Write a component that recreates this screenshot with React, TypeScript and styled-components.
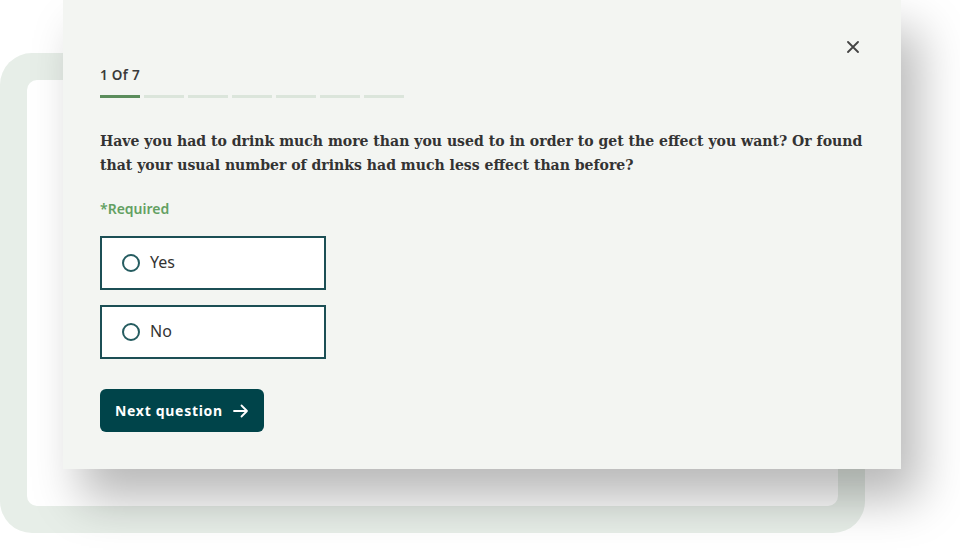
import React from "react";
import styled, { createGlobalStyle } from "styled-components";

const GlobalStyle = createGlobalStyle`
  html, body {
    margin: 0;
    padding: 0;
    background: #ffffff;
  }
  body {
    font-family: "Noto Sans", "Open Sans", sans-serif;
    color: #333333;
  }
`;

const options = ["Yes", "No"];
const totalSteps = 7;
const currentStep = 1;

const App: React.FC = () => {
  return (
    <>
      <GlobalStyle />
      <Stage>
        <BackFrame>
          <BackInner />
        </BackFrame>
        <Card>
          <CloseRow>
            <CloseButton aria-label="Close">
              <svg width="12" height="12" viewBox="0 0 12 12">
                <path
                  d="M1 1 L11 11 M11 1 L1 11"
                  stroke="#444"
                  strokeWidth="1.8"
                  strokeLinecap="round"
                />
              </svg>
            </CloseButton>
          </CloseRow>

          <StepLabel>
            {currentStep} Of {totalSteps}
          </StepLabel>
          <Progress>
            {Array.from({ length: totalSteps }).map((_, i) => (
              <Segment key={i} active={i < currentStep} />
            ))}
          </Progress>

          <Question>
            Have you had to drink much more than you used to in order to get the
            effect you want? Or found that your usual number of drinks had much
            less effect than before?
          </Question>

          <Required>*Required</Required>

          <Options>
            {options.map(o => (
              <Option key={o}>
                <Radio />
                <OptionText>{o}</OptionText>
              </Option>
            ))}
          </Options>

          <NextButton>
            Next question
            <svg width="16" height="14" viewBox="0 0 16 14">
              <path
                d="M1 7 H14 M8.5 1.5 L14 7 L8.5 12.5"
                stroke="#fff"
                strokeWidth="1.8"
                fill="none"
                strokeLinecap="round"
                strokeLinejoin="round"
              />
            </svg>
          </NextButton>
        </Card>
      </Stage>
    </>
  );
};

export default App;

const Stage = styled.div`
  width: 960px;
  height: 556px;
  overflow: hidden;
  display: grid;
  grid-template-columns: 1fr;
  grid-template-rows: 1fr;
`;

const BackFrame = styled.div`
  grid-area: 1 / 1;
  align-self: start;
  justify-self: start;
  margin-top: 53px;
  width: 865px;
  height: 480px;
  box-sizing: border-box;
  padding: 27px;
  border-radius: 32px;
  background: #e7eee8;
  display: flex;
`;

const BackInner = styled.div`
  flex: 1;
  background: #ffffff;
  border-radius: 10px;
`;

const Card = styled.div`
  grid-area: 1 / 1;
  align-self: start;
  justify-self: start;
  margin-left: 63px;
  width: 838px;
  height: 469px;
  box-sizing: border-box;
  padding: 41px 37px 0;
  background: #f3f5f2;
  box-shadow: 18px 30px 45px rgba(0, 0, 0, 0.28);
  display: flex;
  flex-direction: column;
  align-items: flex-start;
`;

const CloseRow = styled.div`
  align-self: stretch;
  display: flex;
  justify-content: flex-end;
  padding-right: 5px;
  height: 12px;
`;

const CloseButton = styled.button`
  border: 0;
  background: none;
  padding: 0;
  width: 12px;
  height: 12px;
  display: flex;
  cursor: pointer;
`;

const StepLabel = styled.div`
  margin-top: 13px;
  font-size: 13.5px;
  line-height: 18px;
  font-weight: 600;
  letter-spacing: 0.3px;
  color: #3a3a3a;
`;

const Progress = styled.div`
  margin-top: 11px;
  display: flex;
  gap: 4px;
`;

const Segment = styled.div<{ active: boolean }>`
  width: 40px;
  height: 3px;
  background: ${p => (p.active ? "#5b8d5c" : "#dbe5db")};
`;

const Question = styled.p`
  margin: 31px 0 0;
  font-family: "DejaVu Serif", "Liberation Serif", serif;
  font-weight: 700;
  font-size: 14.05px;
  line-height: 24px;
  color: #333333;
`;

const Required = styled.div`
  margin-top: 22px;
  font-size: 14px;
  line-height: 20px;
  font-weight: 600;
  color: #62a062;
`;

const Options = styled.div`
  margin-top: 17px;
  display: flex;
  flex-direction: column;
  gap: 15px;
`;

const Option = styled.label`
  width: 226px;
  height: 54px;
  box-sizing: border-box;
  border: 2px solid #1c4f55;
  background: #ffffff;
  display: flex;
  align-items: center;
  padding-left: 20px;
  gap: 10px;
  cursor: pointer;
`;

const Radio = styled.span`
  width: 18px;
  height: 18px;
  box-sizing: border-box;
  border: 2px solid #255c60;
  border-radius: 50%;
  flex-shrink: 0;
`;

const OptionText = styled.span`
  font-size: 16px;
  line-height: 20px;
  color: #333333;
  margin-top: -2px;
`;

const NextButton = styled.button`
  margin-top: 30px;
  height: 43px;
  padding: 0 15px;
  border: 0;
  border-radius: 6px;
  background: #00444a;
  color: #ffffff;
  font-family: "Noto Sans", "Open Sans", sans-serif;
  font-weight: 700;
  font-size: 14px;
  letter-spacing: 0.7px;
  display: flex;
  align-items: center;
  gap: 10px;
  cursor: pointer;
`;
